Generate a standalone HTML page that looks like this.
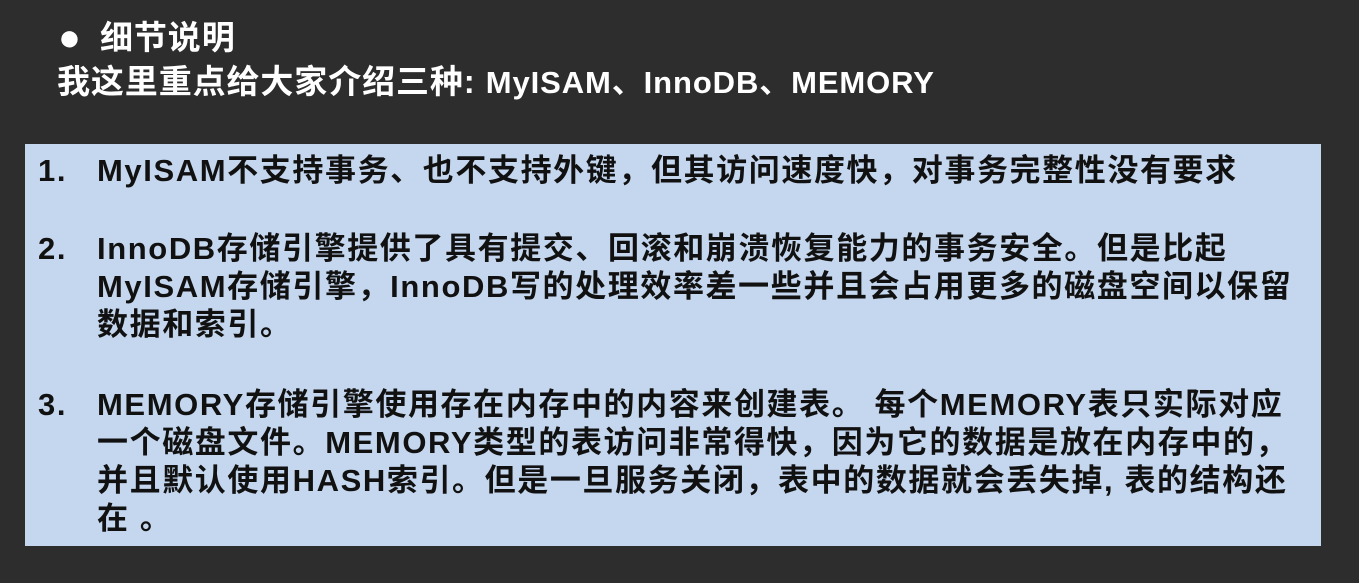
<!DOCTYPE html>
<html><head><meta charset="utf-8"><style>
html,body{margin:0;padding:0}
body{width:1359px;height:583px;background:#2d2d2d;position:relative;overflow:hidden;font-family:"Liberation Sans","Noto Sans CJK SC",sans-serif;font-weight:bold}
.t{position:absolute;color:#fff;font-size:33px;line-height:40px;white-space:nowrap;letter-spacing:0.9px}
.box{position:absolute;left:25px;top:144px;width:1296px;height:402px;background:#c5d7ee}
.l{position:absolute;color:#111;font-size:31px;line-height:38px;white-space:nowrap;letter-spacing:1.6px}
.n{position:absolute;left:38px}
</style></head><body>
<div class="t" style="left:58px;top:18px"><span style="font-size:38px">●</span></div>
<div class="t" style="left:100px;top:18px">细节说明</div>
<div class="t" style="left:57px;top:62px">我这里重点给大家介绍三种: <span style="font-size:31px">MyISAM、InnoDB、MEMORY</span></div>
<div class="box"></div>
<div class="l n" style="top:152px">1.</div>
<div class="l" style="left:97px;top:152px">MyISAM不支持事务、也不支持外键，但其访问速度快，对事务完整性没有要求</div>
<div class="l n" style="top:230px">2.</div>
<div class="l" style="left:97px;top:230px">InnoDB存储引擎提供了具有提交、回滚和崩溃恢复能力的事务安全。但是比起<br>MyISAM存储引擎，InnoDB写的处理效率差一些并且会占用更多的磁盘空间以保留<br>数据和索引。</div>
<div class="l n" style="top:386px">3.</div>
<div class="l" style="left:97px;top:386px">MEMORY存储引擎使用存在内存中的内容来创建表。 每个MEMORY表只实际对应<br>一个磁盘文件。MEMORY类型的表访问非常得快，因为它的数据是放在内存中的，<br>并且默认使用HASH索引。但是一旦服务关闭，表中的数据就会丢失掉, 表的结构还<br>在 。</div>
</body></html>
